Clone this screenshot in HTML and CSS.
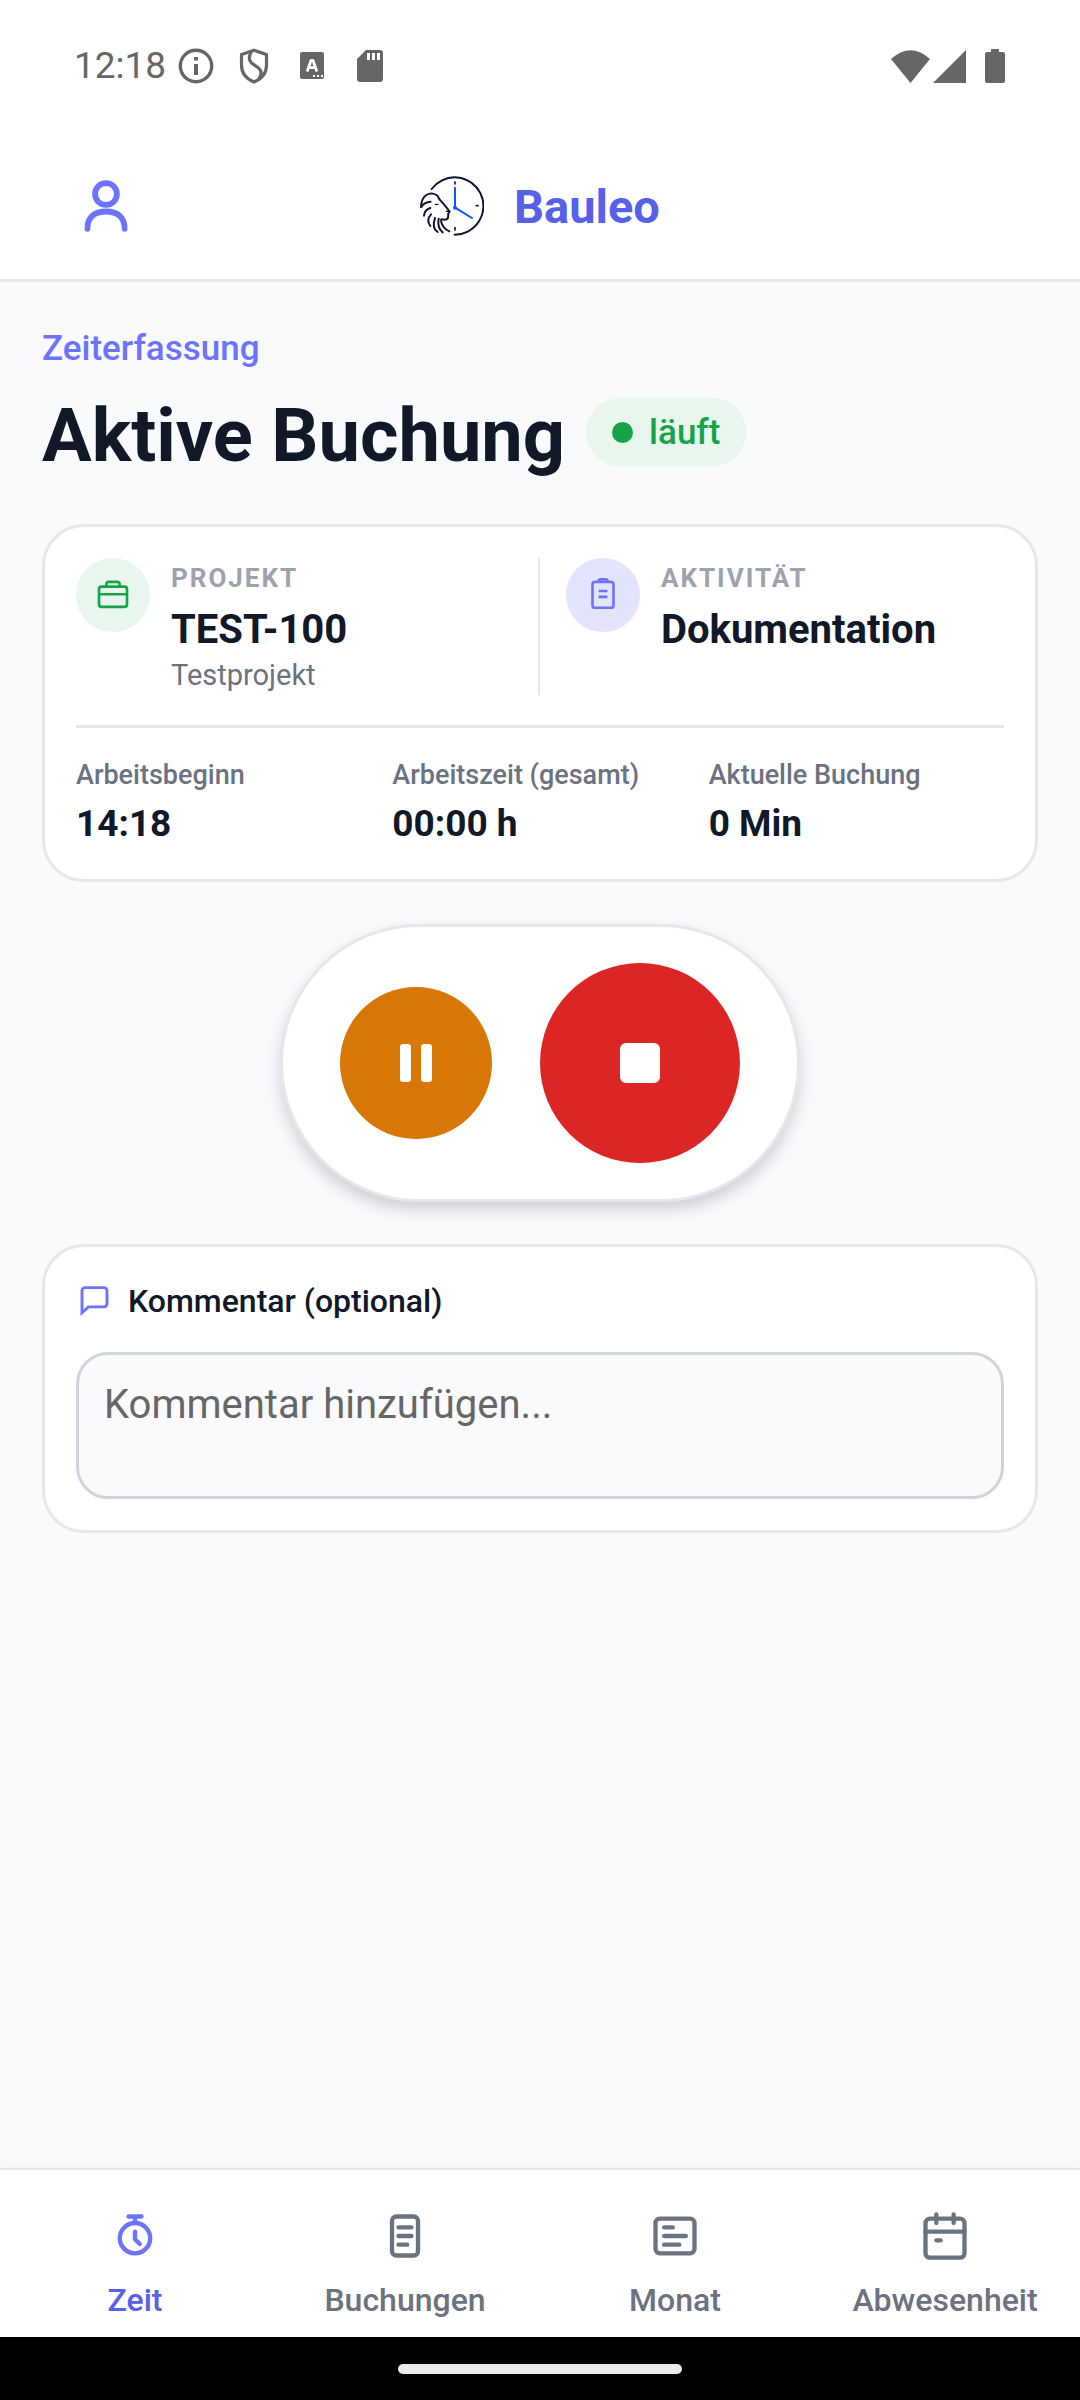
FILE: index.html
```html
<!DOCTYPE html>
<html lang="de">
<head>
<meta charset="utf-8">
<meta name="viewport" content="width=device-width, initial-scale=1">
<title>Bauleo</title>
<link rel="stylesheet" href="styles.css">
</head>
<body>
<div class="app">
  <div class="status">
    <div class="status-left">
      <span class="clock">12:18</span>
      <svg class="status-info" width="36" height="36" viewBox="0 0 36 36"><circle cx="18" cy="18" r="15.7" fill="none" stroke="#666" stroke-width="3.4"/><path d="M16 9h4v3.600h-4zM16 16h4v11h-4z" fill="#666"/></svg>
      <svg class="status-shield" width="30" height="36" viewBox="0 0 30 36" fill="none" stroke="#666" stroke-width="3.200" stroke-linejoin="round"><path d="M15 2.200 27.500 6.500V17c0 8-5 14-12.500 17C7.500 31 2.500 25 2.500 17V6.500z"/><path d="M12.500 3.500c-3 5-3 8.500 0 11.500l7 5c3.500 3 3 7 .5 10.500"/></svg>
      <svg class="status-font" width="24" height="28" viewBox="0 0 24 28"><rect width="24" height="27" rx="2" fill="#666"/><path d="M7.500 18.500 11 8.500h2l3.500 10M9 15.500h6" fill="none" stroke="#fff" stroke-width="2.800" stroke-linecap="round" stroke-linejoin="round"/><path d="M13 23h2v2h-2zM17 23h2v2h-2zM21 23h2v2h-2z" fill="#fff"/></svg>
      <svg class="status-card" width="26" height="32" viewBox="0 0 26 32"><path d="M9 0h14a3 3 0 0 1 3 3v26a3 3 0 0 1-3 3H3a3 3 0 0 1-3-3V9z" fill="#666"/><path d="M10 3h3v7h-3zM15 3h3v7h-3zM20 3h3v7h-3z" fill="#fff"/></svg>
    </div>
    <div class="status-right">
      <svg width="39" height="33" viewBox="0 0 39 33"><path d="M0 9Q19.500-8.500 39 9L19.500 33z" fill="#666"/></svg>
      <svg width="33" height="33" viewBox="0 0 33 33"><path d="M33 0v33H0z" fill="#666"/></svg>
      <svg class="status-battery" width="20" height="34" viewBox="0 0 20 34"><path d="M6 0h8v3h4a2 2 0 0 1 2 2v27a2 2 0 0 1-2 2H2a2 2 0 0 1-2-2V5a2 2 0 0 1 2-2h4z" fill="#666"/></svg>
    </div>
  </div>

  <header class="header">
    <button class="profile" type="button" aria-label="Profil">
      <svg width="64" height="64" viewBox="0 0 64 64" fill="none" stroke="#6b73ff" stroke-width="5.800" stroke-linecap="round"><circle cx="32" cy="20" r="10.900"/><path d="M13.400 54.800C13.400 43 20.500 37.500 32 37.500s18.600 5.500 18.600 17.300"/></svg>
    </button>
    <div class="brand">
      <svg width="64" height="60" viewBox="63 45 192 180" fill="none" stroke="#0b1533" stroke-width="6" stroke-linecap="round" stroke-linejoin="round">
        <path d="M98 84a86 86 0 1 1 69 137"/>
        <path d="M168 63v6M232 134h5M168 200v7" stroke-width="5"/>
        <path d="M168 80v60l51 31" stroke="#0b57ff"/>
        <circle cx="168" cy="140" r="3" stroke="#0b57ff"/>
        <path d="M66 138c1-16 6-30 16-36 12-7 28-5 34 3 3 5 4 9 9 14 8 9 16 18 24 29l3 4-4 5-1 14c-3 6-10 6-19 4"/>
        <path d="M109 130h8M142 151h8" stroke-width="4"/>
        <path d="M68 136c6-9 14-13 27-14M75 164c1-13 8-20 19-23M94 195c-9-12-7-25 2-35M116 213c-12-7-14-24-8-42M131 214c-12-9-15-24-12-41M151 211c-15-7-24-18-25-34"/>
      </svg>
      <span class="brand-name">Bauleo</span>
    </div>
  </header>

  <main class="main">
    <div class="intro">
      <p class="eyebrow">Zeiterfassung</p>
      <div class="title-row">
        <h1 class="title">Aktive Buchung</h1>
        <span class="badge"><span class="badge-dot"></span>läuft</span>
      </div>
    </div>

    <section class="card">
      <div class="details">
        <div class="detail detail-first">
          <span class="bubble bubble-green">
            <svg width="42" height="42" viewBox="0 0 24 24" fill="none" stroke="#16a34a" stroke-width="1.500"><rect x="4" y="7.200" width="16" height="11.600" rx="1.500"/><path d="M4 11.600h16M8.200 7V6a1.500 1.500 0 0 1 1.500-1.500h4.600A1.500 1.500 0 0 1 15.800 6v1"/></svg>
          </span>
          <div class="detail-text">
            <span class="overline">Projekt</span>
            <span class="detail-name">TEST-100</span>
            <span class="detail-note">Testprojekt</span>
          </div>
        </div>
        <div class="detail detail-second">
          <span class="bubble bubble-indigo">
            <svg width="42" height="42" viewBox="0 0 24 24" fill="none" stroke="#6b73ff" stroke-width="1.500"><rect x="6" y="4.500" width="12" height="14.800" rx="1.500"/><path d="M9.500 4.500V4a1 1 0 0 1 1-1h3a1 1 0 0 1 1 1v.5M9.500 9.700h5M9.500 13.100h5"/></svg>
          </span>
          <div class="detail-text">
            <span class="overline">Aktivität</span>
            <span class="detail-name">Dokumentation</span>
          </div>
        </div>
      </div>
      <dl class="stats">
        <div class="stat"><dt>Arbeitsbeginn</dt><dd>14:18</dd></div>
        <div class="stat"><dt>Arbeitszeit (gesamt)</dt><dd>00:00 h</dd></div>
        <div class="stat"><dt>Aktuelle Buchung</dt><dd>0 Min</dd></div>
      </dl>
    </section>

    <div class="controls">
      <button class="control control-pause" type="button" aria-label="Pause">
        <svg width="32" height="38" viewBox="0 0 32 38" fill="#fff"><rect width="11" height="38" rx="3"/><rect x="21" width="11" height="38" rx="3"/></svg>
      </button>
      <button class="control control-stop" type="button" aria-label="Stopp">
        <svg width="40" height="40" viewBox="0 0 40 40" fill="#fff"><rect width="40" height="40" rx="6"/></svg>
      </button>
    </div>

    <section class="card">
      <label class="comment-label" for="comment">
        <svg width="37" height="37" viewBox="0 0 24 24" fill="none" stroke="#6b73ff" stroke-width="1.900"><path d="M3.900 19.300V5a2 2 0 0 1 2-2h12.200a2 2 0 0 1 2 2v8.500a2 2 0 0 1-2 2H8z"/></svg>
        Kommentar (optional)
      </label>
      <textarea class="comment" id="comment" placeholder="Kommentar hinzufügen..."></textarea>
    </section>
  </main>

  <nav class="tabs">
    <a class="tab tab-active" href="#zeit">
      <svg width="52" height="52" viewBox="0 0 24 24"><circle cx="12" cy="13" r="7"/><path d="M9 3h6M12 3v3M12 10v3.500l2.200 2.200"/></svg>
      Zeit
    </a>
    <a class="tab" href="#buchungen">
      <svg width="52" height="52" viewBox="0 0 24 24"><rect x="6" y="3" width="12" height="18" rx="2"/><path d="M9 8h6M9 12h6M9 16h4"/></svg>
      Buchungen
    </a>
    <a class="tab" href="#monat">
      <svg width="52" height="52" viewBox="0 0 24 24"><rect x="3" y="4" width="18" height="16" rx="2"/><path d="M7 8h4M7 12h10M7 16h7"/></svg>
      Monat
    </a>
    <a class="tab" href="#abwesenheit">
      <svg width="52" height="52" viewBox="0 0 24 24"><rect x="3" y="4" width="18" height="18" rx="2"/><path d="M8 2v4M16 2v4M3 10h18M8 14h2"/></svg>
      Abwesenheit
    </a>
  </nav>
  <div class="system-bar"><span class="home-handle"></span></div>
</div>
</body>
</html>
```
FILE: styles.css
```css
* {
  box-sizing: border-box;
}

body {
  margin: 0;
  background: #f9fafc;
  color: #111827;
  font-family: Roboto, "Liberation Sans", sans-serif;
}

button {
  border: 0;
  padding: 0;
  font: inherit;
  cursor: pointer;
}

svg {
  display: block;
  flex: none;
}

.app {
  display: flex;
  flex-direction: column;
  min-height: 100vh;
}

/* System status bar */
.status {
  display: flex;
  justify-content: space-between;
  align-items: center;
  height: 132px;
  padding: 0 75px 0 74px;
  background: #fff;
  color: #666;
}

.status-left,
.status-right {
  display: flex;
  align-items: center;
}

.status-right {
  gap: 3px;
}

.clock {
  font-size: 37px;
  line-height: 44px;
}

.status-info {
  margin-left: 12px;
}

.status-shield {
  margin-left: 25px;
}

.status-font {
  margin-left: 31px;
}

.status-card {
  margin-left: 33px;
}

.status-battery {
  margin-left: 16px;
}

/* App header */
.header {
  display: grid;
  grid-template-columns: 1fr auto 1fr;
  align-items: center;
  height: 150px;
  padding: 0 74px;
  background: #fff;
  border-bottom: 3px solid #e5e7eb;
}

.profile {
  width: 64px;
  background: none;
}

.brand {
  display: flex;
  align-items: center;
  gap: 30px;
}

.brand-name {
  padding-top: 3px;
  color: #5760e8;
  font-size: 47px;
  font-weight: 700;
  line-height: 56px;
}

/* Content */
.main {
  flex: 1;
  display: flex;
  flex-direction: column;
  gap: 42px;
  padding: 45px 42px 42px;
}

.eyebrow {
  margin: 0 0 19px;
  color: #6b73ff;
  font-size: 35px;
  font-weight: 500;
  line-height: 44px;
}

.title-row {
  display: flex;
  align-items: flex-start;
  gap: 21px;
}

.title {
  margin: 0;
  font-size: 74px;
  font-weight: 700;
  line-height: 92px;
}

.badge {
  display: flex;
  align-items: center;
  gap: 16px;
  height: 68px;
  margin-top: 8px;
  padding: 0 26px;
  border-radius: 34px;
  background: #e8f6ed;
  color: #16a34a;
  font-size: 35px;
  font-weight: 500;
}

.badge-dot {
  width: 21px;
  height: 21px;
  border-radius: 50%;
  background: #16a34a;
}

.card {
  padding: 31px;
  border: 3px solid #e5e7eb;
  border-radius: 42px;
  background: #fff;
}

.details {
  display: grid;
  grid-template-columns: 1fr 1fr;
  padding-bottom: 30px;
  border-bottom: 3px solid #e5e7eb;
}

.detail {
  display: flex;
  align-items: flex-start;
  gap: 21px;
}

.detail-first {
  border-right: 2px solid #e5e7eb;
}

.detail-second {
  padding-left: 26px;
}

.bubble {
  display: grid;
  place-items: center;
  flex: none;
  width: 74px;
  height: 74px;
  border-radius: 50%;
}

.bubble-green {
  background: #e8f6ed;
}

.bubble-indigo {
  background: #e3e5ff;
}

.detail-text {
  display: flex;
  flex-direction: column;
}

.overline {
  margin-bottom: 7px;
  color: #9ca3af;
  font-size: 26px;
  font-weight: 700;
  line-height: 40px;
  letter-spacing: 2px;
  text-transform: uppercase;
}

.detail-name {
  font-size: 40px;
  font-weight: 700;
  line-height: 50px;
}

.detail-note {
  color: #6b7280;
  font-size: 29px;
  line-height: 40px;
}

.stats {
  display: grid;
  grid-template-columns: repeat(3, 1fr);
  gap: 21px;
  margin: 0;
  padding-top: 27px;
}

.stat dt {
  margin-bottom: 5px;
  color: #6b7280;
  font-size: 27px;
  font-weight: 500;
  line-height: 40px;
  white-space: nowrap;
}

.stat dd {
  margin: 0;
  font-size: 37px;
  font-weight: 700;
  line-height: 48px;
}

.controls {
  display: flex;
  align-items: center;
  align-self: center;
  gap: 48px;
  padding: 36px 57px;
  border: 3px solid #e5e7eb;
  border-radius: 140px;
  background: #fff;
  box-shadow: 0 8px 16px rgba(17, 24, 39, 0.18);
}

.control {
  display: grid;
  place-items: center;
  border-radius: 50%;
}

.control-pause {
  width: 152px;
  height: 152px;
  background: #d97706;
}

.control-stop {
  width: 200px;
  height: 200px;
  background: #dc2626;
}

.comment-label {
  display: flex;
  align-items: center;
  gap: 15px;
  margin-bottom: 28px;
  font-size: 32px;
  font-weight: 500;
  line-height: 46px;
}

.comment {
  display: block;
  width: 100%;
  height: 147px;
  padding: 26px 25px;
  border: 3px solid #d1d5db;
  border-radius: 32px;
  background: #f9fafc;
  color: #111827;
  font: 400 40px/48px Roboto, "Liberation Sans", sans-serif;
  resize: none;
}

.comment::placeholder {
  color: #666;
  opacity: 1;
}

/* Bottom navigation */
.tabs {
  display: grid;
  grid-template-columns: repeat(4, 1fr);
  padding: 40px 0 18px;
  border-top: 2px solid #e5e7eb;
  background: #fff;
  box-shadow: 0 -2px 12px rgba(17, 24, 39, 0.03);
}

.tab {
  display: flex;
  flex-direction: column;
  align-items: center;
  gap: 19px;
  color: #6b7280;
  font-size: 32px;
  font-weight: 500;
  line-height: 38px;
  text-decoration: none;
}

.tab svg {
  fill: none;
  stroke: #6b7280;
  stroke-width: 2;
  stroke-linecap: round;
  stroke-linejoin: round;
}

.tab-active {
  color: #5760e8;
}

.tab-active svg {
  stroke: #6b73ff;
}

.system-bar {
  display: flex;
  align-items: center;
  justify-content: center;
  height: 63px;
  background: #000;
}

.home-handle {
  width: 284px;
  height: 10px;
  border-radius: 5px;
  background: #ececec;
}
```
